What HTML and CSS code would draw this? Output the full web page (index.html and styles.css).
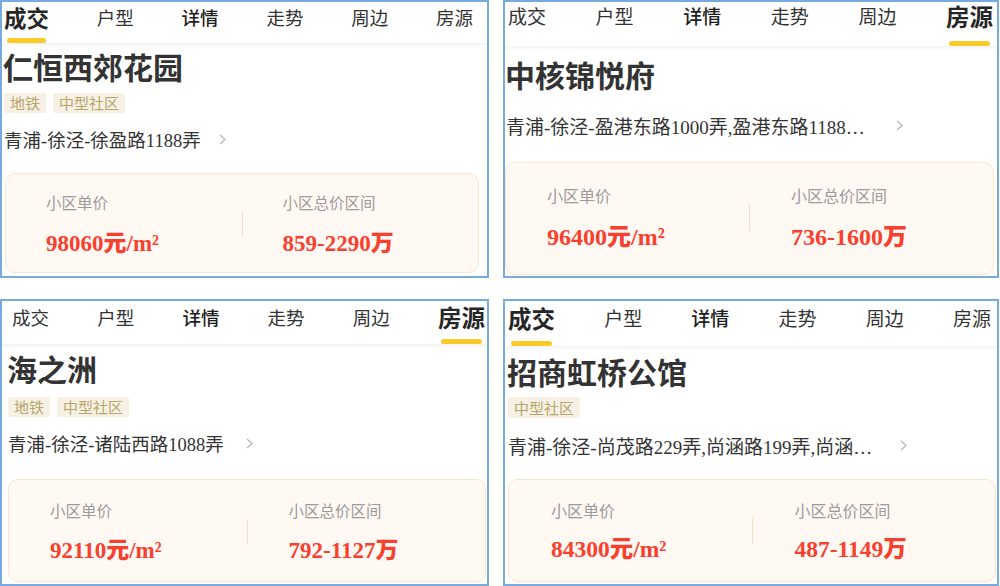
FILE: index.html
```html
<!DOCTYPE html>
<html lang="zh-CN">
<head>
  <meta charset="UTF-8">
  <title>小区卡片</title>
  <link rel="stylesheet" href="styles.css">
</head>
<body>
  <div class="board">

    <!-- 仁恒西郊花园 -->
    <div class="shot shot-a">
      <div class="tabs">
        <div class="tab active"><span>成交</span><i class="bar"></i></div>
        <div class="tab"><span>户型</span></div>
        <div class="tab strong"><span>详情</span></div>
        <div class="tab"><span>走势</span></div>
        <div class="tab"><span>周边</span></div>
        <div class="tab"><span>房源</span></div>
      </div>
      <h2 class="name">仁恒西郊花园</h2>
      <div class="tags">
        <span class="tag">地铁</span>
        <span class="tag">中型社区</span>
      </div>
      <div class="addr">
        <span class="addr-text">青浦-徐泾-徐盈路1188弄</span>
        <svg class="chev" width="7" height="11" viewBox="0 0 7 11"><polyline points="1,1 6,5.5 1,10" /></svg>
      </div>
      <div class="price-box">
        <div class="col">
          <div class="label">小区单价</div>
          <div class="value">98060<b>元</b>/m²</div>
        </div>
        <div class="divider"></div>
        <div class="col">
          <div class="label">小区总价区间</div>
          <div class="value">859-2290<b>万</b></div>
        </div>
      </div>
    </div>

    <!-- 中核锦悦府 -->
    <div class="shot shot-b">
      <div class="tabs">
        <div class="tab"><span>成交</span></div>
        <div class="tab"><span>户型</span></div>
        <div class="tab strong"><span>详情</span></div>
        <div class="tab"><span>走势</span></div>
        <div class="tab"><span>周边</span></div>
        <div class="tab active"><span>房源</span><i class="bar"></i></div>
      </div>
      <h2 class="name">中核锦悦府</h2>
      <div class="addr">
        <span class="addr-text">青浦-徐泾-盈港东路1000弄,盈港东路1188…</span>
        <svg class="chev" width="7" height="11" viewBox="0 0 7 11"><polyline points="1,1 6,5.5 1,10" /></svg>
      </div>
      <div class="price-box">
        <div class="col">
          <div class="label">小区单价</div>
          <div class="value">96400<b>元</b>/m²</div>
        </div>
        <div class="divider"></div>
        <div class="col">
          <div class="label">小区总价区间</div>
          <div class="value">736-1600<b>万</b></div>
        </div>
      </div>
    </div>

    <!-- 海之洲 -->
    <div class="shot shot-c">
      <div class="tabs">
        <div class="tab"><span>成交</span></div>
        <div class="tab"><span>户型</span></div>
        <div class="tab strong"><span>详情</span></div>
        <div class="tab"><span>走势</span></div>
        <div class="tab"><span>周边</span></div>
        <div class="tab active"><span>房源</span><i class="bar"></i></div>
      </div>
      <h2 class="name">海之洲</h2>
      <div class="tags">
        <span class="tag">地铁</span>
        <span class="tag">中型社区</span>
      </div>
      <div class="addr">
        <span class="addr-text">青浦-徐泾-诸陆西路1088弄</span>
        <svg class="chev" width="7" height="11" viewBox="0 0 7 11"><polyline points="1,1 6,5.5 1,10" /></svg>
      </div>
      <div class="price-box">
        <div class="col">
          <div class="label">小区单价</div>
          <div class="value">92110<b>元</b>/m²</div>
        </div>
        <div class="divider"></div>
        <div class="col">
          <div class="label">小区总价区间</div>
          <div class="value">792-1127<b>万</b></div>
        </div>
      </div>
    </div>

    <!-- 招商虹桥公馆 -->
    <div class="shot shot-d">
      <div class="tabs">
        <div class="tab active"><span>成交</span><i class="bar"></i></div>
        <div class="tab"><span>户型</span></div>
        <div class="tab strong"><span>详情</span></div>
        <div class="tab"><span>走势</span></div>
        <div class="tab"><span>周边</span></div>
        <div class="tab"><span>房源</span></div>
      </div>
      <h2 class="name">招商虹桥公馆</h2>
      <div class="tags">
        <span class="tag">中型社区</span>
      </div>
      <div class="addr">
        <span class="addr-text">青浦-徐泾-尚茂路229弄,尚涵路199弄,尚涵…</span>
        <svg class="chev" width="7" height="11" viewBox="0 0 7 11"><polyline points="1,1 6,5.5 1,10" /></svg>
      </div>
      <div class="price-box">
        <div class="col">
          <div class="label">小区单价</div>
          <div class="value">84300<b>元</b>/m²</div>
        </div>
        <div class="divider"></div>
        <div class="col">
          <div class="label">小区总价区间</div>
          <div class="value">487-1149<b>万</b></div>
        </div>
      </div>
    </div>

  </div>
</body>
</html>
```

FILE: styles.css
```css
body {
  margin: 0;
  background: #fff;
  font-family: "Noto Sans CJK SC", sans-serif;
  color: #333;
}
.board {
  display: grid;
  grid-template-columns: 489px 496px;
  grid-template-rows: 278px 287px;
  column-gap: 14px;
  row-gap: 21px;
}

/* one phone screenshot */
.shot {
  --tab-h: 42px;
  --tab-pt: 2px;
  --tab-pl: 2px;
  --tab-pr: 14px;
  --tab-fs: 18.5px;
  --tab-fs-on: 22.5px;
  --pl: 1px;
  --title-mt: 4px;
  --tags-mt: 9px;
  --tag-h: 20px;
  --addr-mt: 14px;
  --addr-fs: 18.5px;
  --chev-gap: 18px;
  --box-mt: 22px;
  --box-ml: 3px;
  --box-mr: 8px;
  --box-pt: 18px;
  --box-pb: 16px;
  --col-pl: 40px;
  --label-fs: 15.5px;
  --val-fs: 23px;
  --val-mt: 14px;
  box-sizing: border-box;
  border: 2px solid #78a9df;
  background: #fff;
  overflow: hidden;
}
.shot-b {
  --tab-h: 45px;
  --tab-pt: 1px;
  --tab-pl: 3px;
  --tab-pr: 4px;
  --tab-fs: 19px;
  --tab-fs-on: 23.5px;
  --pl: 0px;
  --title-mt: 9px;
  --addr-mt: 21px;
  --addr-fs: 19px;
  --chev-gap: 31px;
  --box-mt: 25px;
  --box-ml: 0px;
  --box-mr: 3px;
  --box-pt: 22px;
  --box-pb: 24px;
  --col-pl: 41px;
  --label-fs: 16px;
  --val-fs: 24px;
  --val-mt: 15px;
}
.shot-c {
  --tab-h: 44px;
  --tab-pt: 3px;
  --tab-pl: 10px;
  --tab-pr: 2px;
  --tab-fs-on: 23.5px;
  --pl: 5px;
  --title-mt: 5px;
  --tags-mt: 11px;
  --chev-gap: 22px;
  --box-mt: 24px;
  --box-ml: 6px;
  --box-mr: 1px;
  --box-pt: 20px;
  --box-pb: 18px;
  --col-pl: 41px;
  --val-mt: 13px;
}
.shot-d {
  --tab-h: 46px;
  --tab-pt: 4px;
  --tab-pl: 3px;
  --tab-pr: 6px;
  --tab-fs: 19px;
  --tab-fs-on: 23.5px;
  --pl: 2px;
  --title-mt: 6px;
  --tags-mt: 8px;
  --tag-h: 21px;
  --addr-mt: 15px;
  --addr-fs: 19px;
  --chev-gap: 28px;
  --box-mt: 22px;
  --box-ml: 3px;
  --box-mr: 1px;
  --box-pt: 20px;
  --box-pb: 19px;
  --col-pl: 42px;
  --label-fs: 16px;
  --val-fs: 23.5px;
  --val-mt: 12px;
}

/* tab bar */
.tabs {
  display: flex;
  justify-content: space-between;
  height: var(--tab-h);
  padding: var(--tab-pt) var(--tab-pr) 0 var(--tab-pl);
  box-sizing: border-box;
  box-shadow: 0 2px 3px rgba(0, 0, 0, 0.045);
  border-bottom: 1px solid #f4f4f4;
}
.tab {
  display: flex;
  flex-direction: column;
  align-items: center;
  justify-content: space-between;
  font-size: var(--tab-fs);
  line-height: 26px;
  color: #333;
}
.tab.strong {
  font-weight: 500;
  color: #1e1e1e;
}
.tab.active {
  font-size: var(--tab-fs-on);
  font-weight: 700;
  color: #262626;
}
.bar {
  display: block;
  width: calc(100% - 6px);
  height: 5px;
  border-radius: 3px;
  background: #fbc928;
}

/* body */
.name {
  margin: var(--title-mt) 0 0;
  padding-left: var(--pl);
  font-size: 30px;
  line-height: 36px;
  font-weight: 700;
  color: #333;
}
.tags {
  display: flex;
  gap: 7px;
  margin-top: var(--tags-mt);
  padding-left: calc(var(--pl) + 1px);
}
.tag {
  height: var(--tag-h);
  line-height: var(--tag-h);
  padding: 0 6px;
  border-radius: 2px;
  background: #f6f1e4;
  color: #b9a46c;
  font-size: 15px;
}
.addr {
  display: flex;
  align-items: center;
  margin-top: var(--addr-mt);
  padding-left: calc(var(--pl) + 1px);
  height: 24px;
}
.addr-text {
  font-family: "Liberation Serif", "Noto Sans CJK SC", serif;
  font-size: var(--addr-fs);
  color: #333;
  white-space: nowrap;
}
.chev {
  margin-left: var(--chev-gap);
  fill: none;
  stroke: #b9b9b9;
  stroke-width: 1.3;
}

/* price box */
.price-box {
  display: grid;
  grid-template-columns: 1fr 1px 1fr;
  margin: var(--box-mt) var(--box-mr) 0 var(--box-ml);
  padding: var(--box-pt) 0 var(--box-pb);
  border: 1.5px solid #fde4cc;
  border-radius: 10px;
  background: #fff8f3;
}
.col {
  padding-left: var(--col-pl);
}
.label {
  font-size: var(--label-fs);
  line-height: 20px;
  height: 20px;
  color: #9b9b9b;
}
.value {
  margin-top: var(--val-mt);
  height: 30px;
  font-family: "Liberation Serif", "Noto Sans CJK SC", serif;
  font-size: var(--val-fs);
  line-height: 30px;
  font-weight: 700;
  color: #f8402f;
  white-space: nowrap;
}
.value b {
  font-family: "Noto Sans CJK SC", sans-serif;
}
.divider {
  align-self: center;
  height: 26px;
  background: #f8dec8;
}
```
